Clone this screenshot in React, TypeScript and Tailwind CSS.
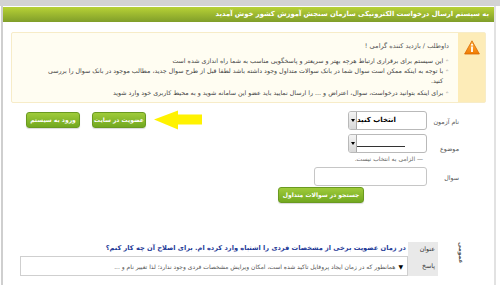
import React from "react";

const font = { fontFamily: '"DejaVu Sans", sans-serif' };

function WarnIcon() {
  return (
    <svg width="16" height="15" viewBox="0 0 16 15">
      <defs>
        <linearGradient id="wg" x1="0" y1="0" x2="0" y2="1">
          <stop offset="0" stopColor="#ffb347" />
          <stop offset="1" stopColor="#f07a00" />
        </linearGradient>
      </defs>
      <path d="M8 0.8 L15.4 14 L0.6 14 Z" fill="url(#wg)" stroke="#d86a00" strokeWidth="0.8" strokeLinejoin="round" />
      <rect x="7.1" y="6.5" width="1.8" height="5.5" fill="#fff" />
      <circle cx="8" cy="4.8" r="1" fill="#fff" />
    </svg>
  );
}

function Arrow() {
  return (
    <svg width="50" height="20" viewBox="0 0 50 20">
      <path d="M1 9.5 L25 0.5 L25 4.5 L49 4.5 L49 14.5 L25 14.5 L25 19.5 Z" fill="#fff200" />
    </svg>
  );
}

function GreenBtn({ children, className = "" }: { children: React.ReactNode; className?: string }) {
  return (
    <div
      className={
        "flex items-center justify-center whitespace-nowrap rounded-[3px] bg-gradient-to-b from-[#9fcb3a] to-[#72a81f] border border-[#6a9a20] text-white font-bold text-[6px] leading-none shadow-[0_1px_1px_rgba(0,0,0,0.15)] " +
        className
      }
    >
      {children}
    </div>
  );
}

function SelectBox({ children }: { children: React.ReactNode }) {
  return (
    <div className="flex h-[19px] w-[79px] rounded-[3px] border border-[#b9b9b9] bg-white overflow-hidden" dir="ltr">
      <div className="flex w-[8px] items-center justify-center border-r border-[#a9a9a9] bg-gradient-to-b from-[#f4f4f4] to-[#d8d8d8]">
        <span className="block w-0 h-0 border-l-[2px] border-r-[2px] border-t-[3px] border-l-transparent border-r-transparent border-t-black" />
      </div>
      <div className="flex flex-1 items-center justify-end pr-[5px]" dir="rtl">
        {children}
      </div>
    </div>
  );
}

export default function App() {
  return (
    <div className="w-[500px] h-[285px] overflow-hidden bg-white text-[#333]" style={font}>
      <div className="h-[6px] bg-[#d3d3d3]" />
      <div className="h-[279px] ml-[1px] mr-[4px] border-l-2 border-r-2 border-l-[#cfcfcf] border-r-[#e2e2e2] bg-white">
        <div className="h-[1px]" />
        <div
          className="h-[15px] bg-gradient-to-b from-[#b8d236] to-[#809e2a] flex items-center justify-start pr-[4px] text-white font-bold text-[6.8px] whitespace-nowrap"
          dir="rtl"
        >
          <span className="pr-[1px]">به سیستم ارسال درخواست الکترونیکی سازمان سنجش آموزش کشور خوش آمدید</span>
        </div>

        <div className="mx-[8px] mt-[10px] h-[71px] flex rounded-[2px] border border-[#f7ecc8] bg-[#fffdf2]" dir="rtl">
          <div className="w-[27px] bg-[#fdecb8] flex justify-center pt-[7px]">
            <WarnIcon />
          </div>
          <div className="flex-1 pr-[9px] pt-[8px] text-[6.3px] leading-[10px] text-[#444] whitespace-nowrap">
            <div className="text-[#555] mb-[5px] text-[6.6px]">داوطلب / بازدید کننده گرامی !</div>
            <div>◦ این سیستم برای برقراری ارتباط هرچه بهتر و سریعتر و پاسخگویی مناسب به شما راه اندازی شده است</div>
            <div>◦ با توجه به اینکه ممکن است سوال شما در بانک سوالات متداول وجود داشته باشد لطفا قبل از طرح سوال جدید، مطالب موجود در بانک سوال را بررسی</div>
            <div className="pr-[6px]">کنید.</div>
            <div className="mt-[2px]">◦ برای اینکه بتوانید درخواست، سوال، اعتراض و ... را ارسال نمایید باید عضو این سامانه شوید و به محیط کاربری خود وارد شوید</div>
          </div>
        </div>

        <div className="flex justify-between mt-[8px]">
          <div className="flex items-start pl-[23px] pt-[1px]" dir="ltr">
            <GreenBtn className="w-[54px] h-[16px]">ورود به سیستم</GreenBtn>
            <GreenBtn className="w-[54px] h-[16px] ml-[12px]">عضویت در سایت</GreenBtn>
            <div className="ml-[7px] -mt-[2px]">
              <Arrow />
            </div>
          </div>

          <div className="flex flex-col items-start pr-[35px]" dir="rtl">
            <div className="flex items-center">
              <div className="w-[32px] text-[6.3px] text-[#555] pt-[2px] whitespace-nowrap">نام آزمون</div>
              <SelectBox>
                <span className="font-bold text-[7px] text-black whitespace-nowrap">انتخاب کنید</span>
              </SelectBox>
            </div>
            <div className="flex items-end mt-[4px]">
              <div className="w-[32px] text-[6.3px] text-[#555]">موضوع</div>
              <SelectBox>
                <span className="block w-[48px] h-[1px] bg-[#333] mt-[5px]" />
              </SelectBox>
            </div>
            <div className="mr-[36px] mt-[1px] text-[6px] text-[#666] leading-[10px] whitespace-nowrap">— الزامی به انتخاب نیست.</div>
            <div className="flex items-center mt-[3px]">
              <div className="w-[32px] text-[6.3px] text-[#555] pt-[2px]">سوال</div>
              <div className="h-[19px] w-[113px] rounded-[3px] border border-[#c6c6c6] bg-white" />
            </div>
            <GreenBtn className="mr-[95px] mt-[1px] w-[86px] h-[16px]">جستجو در سوالات متداول</GreenBtn>
          </div>
        </div>

        <div className="flex mt-[39px]" dir="rtl">
          <div className="w-[56px] flex items-start justify-start pr-[30px]">
            <span className="text-[6px] font-bold text-[#555] [writing-mode:vertical-rl] leading-none">عمومی</span>
          </div>
          <div className="w-[418px] flex flex-col text-[6.3px] whitespace-nowrap">
            <div className="flex">
              <div className="w-[30px] bg-[#e9e9e9] pr-[3px] h-[14px] flex items-center text-[#333]">عنوان</div>
              <div className="flex-1 pr-[2px] flex items-center font-bold text-[#1f3b97] text-[6.6px]">
                در زمان عضویت برخی از مشخصات فردی را اشتباه وارد کرده ام. برای اصلاح آن چه کار کنم؟
              </div>
            </div>
            <div className="flex">
              <div className="w-[30px] bg-[#e9e9e9] pr-[3px] h-[20px] flex items-center text-[#333]">پاسخ</div>
              <div className="flex-1 h-[20px] border border-[#cfcfcf] flex items-center pr-[4px] text-[#555] text-[6px]">
                <span className="text-black text-[6px] ml-[3px]">▼</span>
                همانطور که در زمان ایجاد پروفایل تاکید شده است، امکان ویرایش مشخصات فردی وجود ندارد؛ لذا تغییر نام و ...
              </div>
            </div>
          </div>
        </div>
      </div>
    </div>
  );
}
